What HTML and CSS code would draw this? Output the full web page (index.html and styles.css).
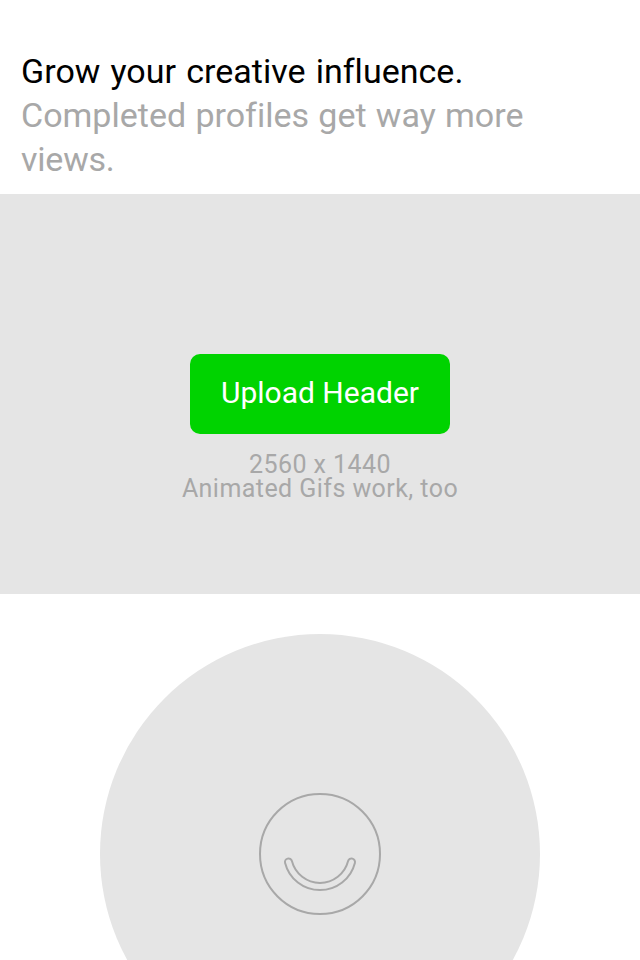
FILE: index.html
```html
<!DOCTYPE html>
<html lang="en">
<head>
<meta charset="utf-8">
<title>Complete your profile</title>
<link rel="stylesheet" href="styles.css">
</head>
<body>
<h1 class="intro"><span class="lead">Grow your creative influence.</span><br><span class="line2">Completed profiles get way more</span><br><span class="line3">views.</span></h1>
<section class="cover">
<button class="upload"><span class="upload-label">Upload Header</span></button>
<div class="hint"><div class="size">2560 x 1440</div><div class="note">Animated Gifs work, too</div></div>
</section>
<section class="avatar-area">
<div class="avatar">
<svg class="smile" viewBox="0 0 124 124" fill="none" stroke="#a8a8a8" stroke-width="2">
<circle cx="62" cy="62" r="60"/>
<path d="M27.1 70.9A3.5 3.5 0 0 1 33.9 69.1A29 29 0 0 0 90.1 69.1A3.5 3.5 0 0 1 96.9 70.9A36 36 0 0 1 27.1 70.9Z"/>
</svg>
</div>
</section>
</body>
</html>
```
FILE: styles.css
```css
* { box-sizing: border-box; }
body { margin: 0; height: 960px; overflow: hidden; background: #fff; color: #a8a8a8; font-family: Roboto, "Liberation Sans", sans-serif; font-variant-ligatures: none; }
.intro { height: 194px; margin: 0; padding: 49px 20px 0 21px; font-size: 34px; font-weight: 400; line-height: 44px; letter-spacing: .03px; white-space: nowrap; }
.lead { color: #000; word-spacing: 1.6px; }
.line2 { letter-spacing: .01px; word-spacing: .8px; }
.line3 { letter-spacing: -.2px; }
.cover { display: flex; flex-direction: column; align-items: center; height: 400px; padding-top: 160px; background: #e5e5e5; }
.upload { width: 260px; height: 80px; padding: 0 0 2px; border: 0; border-radius: 10px; background: #00d300; color: #fff; font: 30px/78px Roboto, "Liberation Sans", sans-serif; }
.hint { margin-top: 19px; font-size: 25px; line-height: 24px; letter-spacing: .44px; text-align: center; }
.avatar-area { height: 366px; padding-top: 40px; overflow: hidden; }
.avatar { display: flex; justify-content: center; width: 440px; height: 440px; margin: 0 auto; padding-top: 158px; border-radius: 50%; background: #e5e5e5; }
.smile { width: 124px; height: 124px; }
```
